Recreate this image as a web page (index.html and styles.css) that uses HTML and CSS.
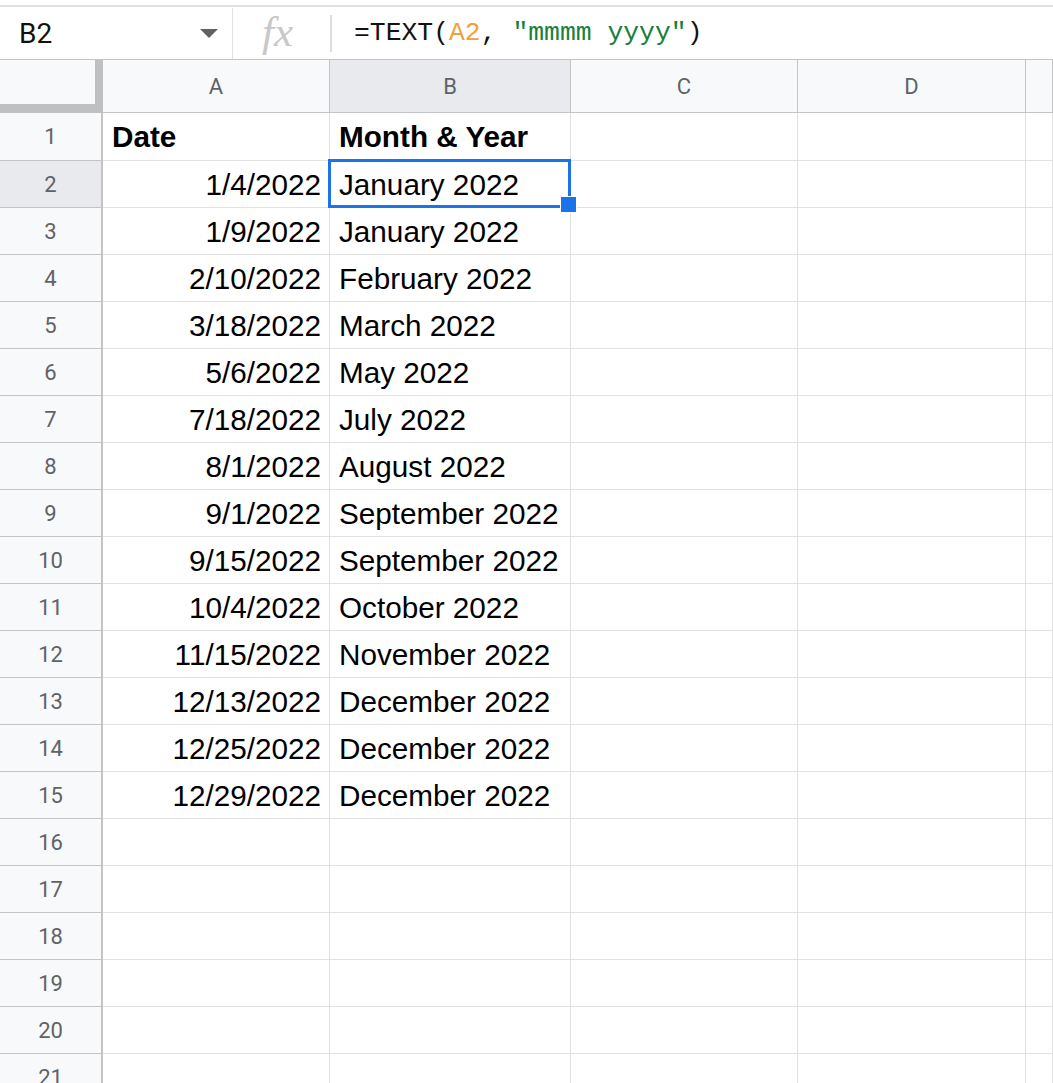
FILE: index.html
```html
<!DOCTYPE html>
<html lang="en">

<head>
  <meta charset="UTF-8">
  <title>Sheet - TEXT month and year</title>
  <link rel="stylesheet" href="styles.css">
</head>

<body>
  <div class="formula-bar">
    <div class="name-box">
      <span class="ref">B2</span>
      <span class="caret"></span>
    </div>
    <div class="fx">fx</div>
    <div class="formula">=TEXT(<span class="arg">A2</span>, <span class="str">"mmmm yyyy"</span>)</div>
  </div>

  <div class="sheet">
    <div class="corner"></div>
    <div class="ch">A</div>
    <div class="ch active">B</div>
    <div class="ch">C</div>
    <div class="ch">D</div>
    <div class="ch"></div>

    <div class="rh">1</div>
    <div class="cell bold">Date</div>
    <div class="cell bold">Month &amp; Year</div>
    <div class="cell"></div><div class="cell"></div><div class="cell"></div>

    <div class="rh active">2</div>
    <div class="cell num">1/4/2022</div>
    <div class="cell sel">January 2022</div>
    <div class="cell"></div><div class="cell"></div><div class="cell"></div>

    <div class="rh">3</div>
    <div class="cell num">1/9/2022</div>
    <div class="cell">January 2022</div>
    <div class="cell"></div><div class="cell"></div><div class="cell"></div>

    <div class="rh">4</div>
    <div class="cell num">2/10/2022</div>
    <div class="cell">February 2022</div>
    <div class="cell"></div><div class="cell"></div><div class="cell"></div>

    <div class="rh">5</div>
    <div class="cell num">3/18/2022</div>
    <div class="cell">March 2022</div>
    <div class="cell"></div><div class="cell"></div><div class="cell"></div>

    <div class="rh">6</div>
    <div class="cell num">5/6/2022</div>
    <div class="cell">May 2022</div>
    <div class="cell"></div><div class="cell"></div><div class="cell"></div>

    <div class="rh">7</div>
    <div class="cell num">7/18/2022</div>
    <div class="cell">July 2022</div>
    <div class="cell"></div><div class="cell"></div><div class="cell"></div>

    <div class="rh">8</div>
    <div class="cell num">8/1/2022</div>
    <div class="cell">August 2022</div>
    <div class="cell"></div><div class="cell"></div><div class="cell"></div>

    <div class="rh">9</div>
    <div class="cell num">9/1/2022</div>
    <div class="cell">September 2022</div>
    <div class="cell"></div><div class="cell"></div><div class="cell"></div>

    <div class="rh">10</div>
    <div class="cell num">9/15/2022</div>
    <div class="cell">September 2022</div>
    <div class="cell"></div><div class="cell"></div><div class="cell"></div>

    <div class="rh">11</div>
    <div class="cell num">10/4/2022</div>
    <div class="cell">October 2022</div>
    <div class="cell"></div><div class="cell"></div><div class="cell"></div>

    <div class="rh">12</div>
    <div class="cell num">11/15/2022</div>
    <div class="cell">November 2022</div>
    <div class="cell"></div><div class="cell"></div><div class="cell"></div>

    <div class="rh">13</div>
    <div class="cell num">12/13/2022</div>
    <div class="cell">December 2022</div>
    <div class="cell"></div><div class="cell"></div><div class="cell"></div>

    <div class="rh">14</div>
    <div class="cell num">12/25/2022</div>
    <div class="cell">December 2022</div>
    <div class="cell"></div><div class="cell"></div><div class="cell"></div>

    <div class="rh">15</div>
    <div class="cell num">12/29/2022</div>
    <div class="cell">December 2022</div>
    <div class="cell"></div><div class="cell"></div><div class="cell"></div>

    <div class="rh">16</div>
    <div class="cell"></div><div class="cell"></div><div class="cell"></div><div class="cell"></div><div class="cell"></div>

    <div class="rh">17</div>
    <div class="cell"></div><div class="cell"></div><div class="cell"></div><div class="cell"></div><div class="cell"></div>

    <div class="rh">18</div>
    <div class="cell"></div><div class="cell"></div><div class="cell"></div><div class="cell"></div><div class="cell"></div>

    <div class="rh">19</div>
    <div class="cell"></div><div class="cell"></div><div class="cell"></div><div class="cell"></div><div class="cell"></div>

    <div class="rh">20</div>
    <div class="cell"></div><div class="cell"></div><div class="cell"></div><div class="cell"></div><div class="cell"></div>

    <div class="rh">21</div>
    <div class="cell"></div><div class="cell"></div><div class="cell"></div><div class="cell"></div><div class="cell"></div>
  </div>
</body>

</html>
```

FILE: styles.css
```css
* {
  box-sizing: border-box;
}

body {
  margin: 0;
  background: #fff;
  overflow: hidden;
  font-family: "Liberation Sans", Arial, sans-serif;
}

/* formula bar */

.formula-bar {
  display: flex;
  align-items: center;
  height: 54px;
  margin-top: 5px;
  border-top: 2px solid #e1e1e1;
}

.name-box {
  display: flex;
  align-items: center;
  justify-content: space-between;
  align-self: stretch;
  width: 233px;
  margin-top: 1px;
  padding: 0 14px 0 19px;
  border-right: 1px solid #e0e0e0;
}

.ref {
  font: 28px Roboto, sans-serif;
  color: #111;
}

.caret {
  width: 0;
  height: 0;
  border-left: 9px solid transparent;
  border-right: 9px solid transparent;
  border-top: 9px solid #5f6368;
}

.fx {
  width: 99px;
  height: 37px;
  padding-left: 29px;
  border-right: 2px solid #dadce0;
  font: italic 43px "Liberation Serif", serif;
  line-height: 34px;
  color: #c8c8c8;
}

.formula {
  padding-left: 22px;
  font: 26.4px "Liberation Mono", monospace;
  color: #111;
}

.arg {
  color: #f4a03a;
}

.str {
  color: #188038;
}

/* grid */

.sheet {
  display: grid;
  grid-template-columns: 103px 227px 241px 227px 228px 1fr;
  grid-template-rows: 53px 48px repeat(20, 47px);
  border-top: 1px solid #c4c4c4;
}

.corner {
  background: #f8f9fa;
  border-right: 8px solid #c0c0c0;
  border-bottom: 9px solid #c0c0c0;
}

.ch,
.rh {
  display: flex;
  align-items: center;
  justify-content: center;
  background: #f8f9fa;
  font: 22px Roboto, sans-serif;
  color: #5f6368;
}

.ch {
  border-right: 1px solid #c4c4c4;
  border-bottom: 1px solid #c4c4c4;
}

.rh {
  border-right: 2px solid #c4c4c4;
  border-bottom: 1px solid #c4c4c4;
}

.ch.active,
.rh.active {
  background: #e8eaed;
}

.cell {
  position: relative;
  display: flex;
  align-items: center;
  padding: 1px 8px 0 9px;
  border-right: 1px solid #e2e2e2;
  border-bottom: 1px solid #e2e2e2;
  font-size: 29.7px;
  color: #000;
  white-space: nowrap;
}

.cell.num {
  justify-content: flex-end;
}

.cell.bold {
  font-weight: bold;
}

.cell.sel::after {
  content: "";
  position: absolute;
  top: -2px;
  left: -2px;
  right: -1px;
  bottom: -1px;
  border: 3px solid #1a73e8;
}

.cell.sel::before {
  content: "";
  position: absolute;
  right: -7px;
  bottom: -6px;
  width: 15px;
  height: 15px;
  background: #1a73e8;
  border: 1px solid #fff;
  z-index: 1;
}
```
